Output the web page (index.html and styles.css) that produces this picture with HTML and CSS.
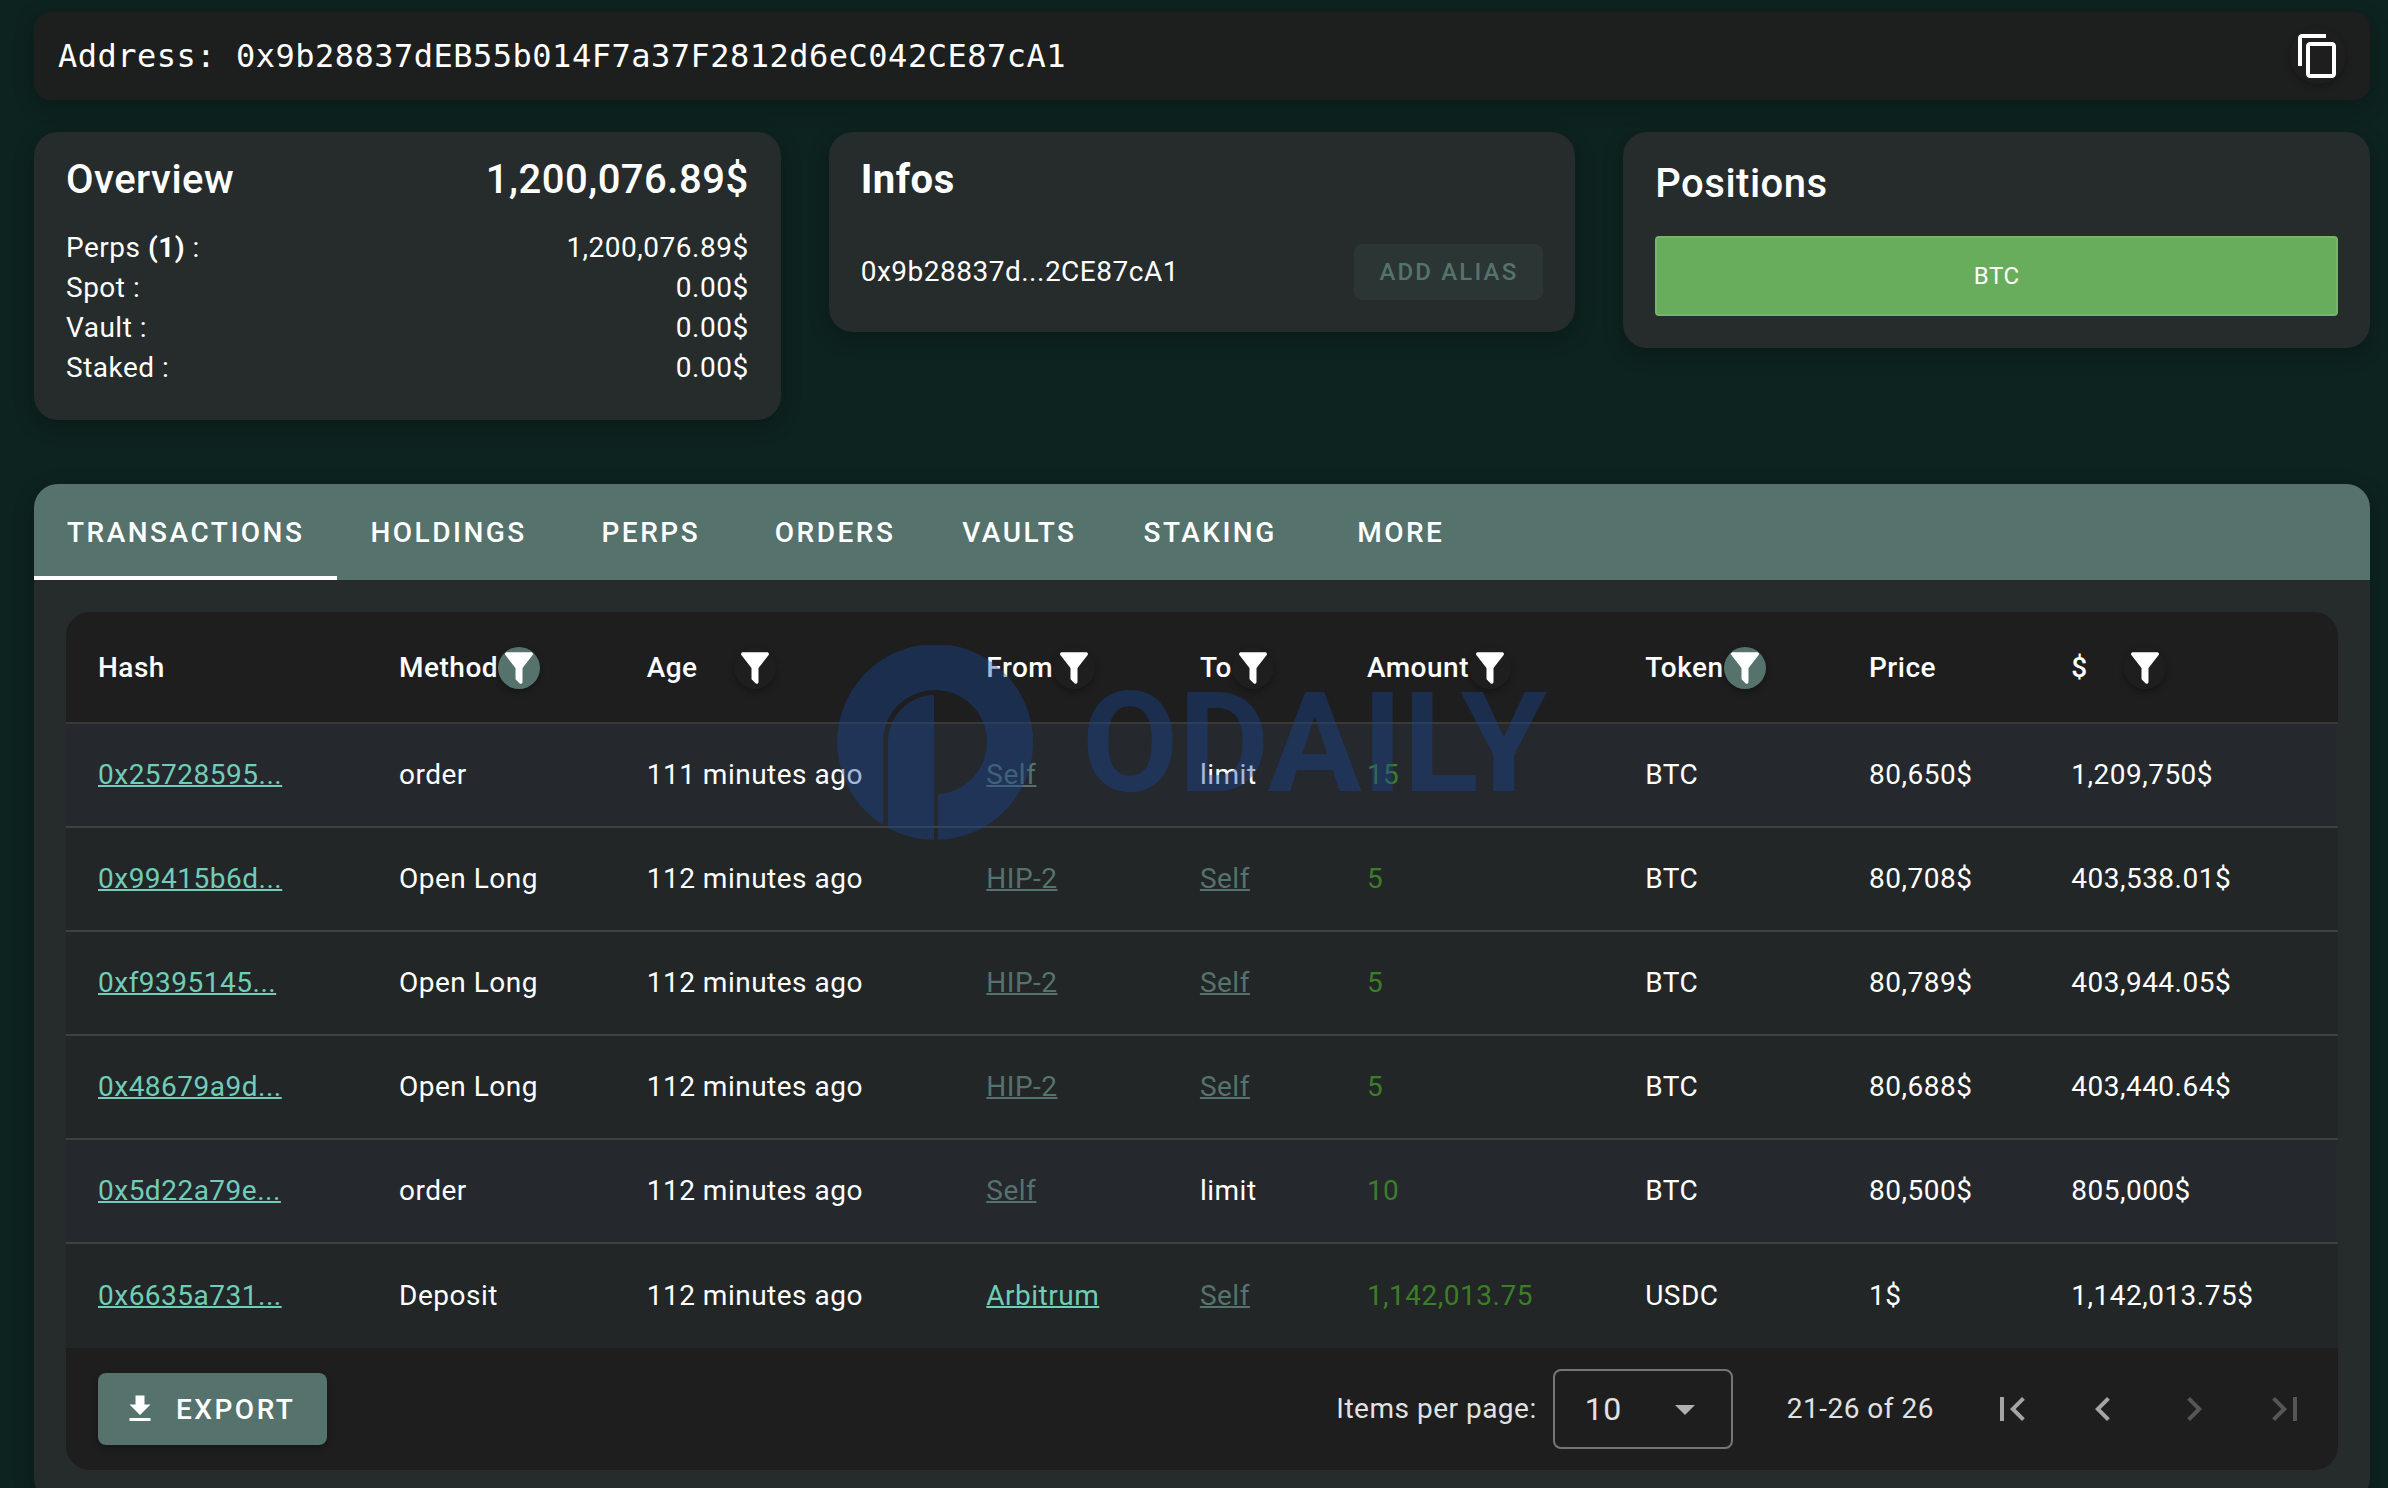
FILE: index.html
```html
<!DOCTYPE html>
<html lang="en">
<head>
    <meta charset="UTF-8">
    <meta name="viewport" content="width=device-width, initial-scale=1.0">
    <title>Address details</title>
    <link rel="stylesheet" href="styles.css">
</head>
<body>
    <!-- Shared icons -->
    <svg class="sprite" aria-hidden="true">
        <symbol id="icon-filter" viewBox="0 0 24 24">
            <path d="M14,12V19.88C14.04,20.18 13.94,20.5 13.71,20.71C13.32,21.1 12.69,21.1 12.3,20.71L10.29,18.7C10.06,18.47 9.96,18.16 10,17.87V12H9.97L4.21,4.62C3.87,4.19 3.95,3.56 4.38,3.22C4.57,3.08 4.78,3 5,3V3H19V3C19.22,3 19.43,3.08 19.62,3.22C20.05,3.56 20.13,4.19 19.79,4.62L14.03,12H14Z"/>
        </symbol>
    </svg>

    <main class="page">
        <header class="address-bar">
            <span class="address">Address: 0x9b28837dEB55b014F7a37F2812d6eC042CE87cA1</span>
            <button class="copy-btn" aria-label="Copy address">
                <svg viewBox="0 0 24 24"><path d="M16 1H4c-1.1 0-2 .9-2 2v14h2V3h12V1zm3 4H8c-1.1 0-2 .9-2 2v14c0 1.1.9 2 2 2h11c1.1 0 2-.9 2-2V7c0-1.1-.9-2-2-2zm0 16H8V7h11v14z"/></svg>
            </button>
        </header>

        <div class="cards">
            <section class="card">
                <h2 class="card-title"><span>Overview</span><span>1,200,076.89$</span></h2>
                <dl class="balances">
                    <div class="balance"><dt>Perps <b>(1)</b> :</dt><dd>1,200,076.89$</dd></div>
                    <div class="balance"><dt>Spot :</dt><dd>0.00$</dd></div>
                    <div class="balance"><dt>Vault :</dt><dd>0.00$</dd></div>
                    <div class="balance"><dt>Staked :</dt><dd>0.00$</dd></div>
                </dl>
            </section>

            <section class="card">
                <h2 class="card-title bold">Infos</h2>
                <div class="alias">
                    <span>0x9b28837d...2CE87cA1</span>
                    <button class="alias-btn">ADD ALIAS</button>
                </div>
            </section>

            <section class="card positions">
                <h2 class="card-title">Positions</h2>
                <div class="position">BTC</div>
            </section>
        </div>

        <section class="panel">
            <nav class="tabs">
                <button class="tab active">TRANSACTIONS</button>
                <button class="tab">HOLDINGS</button>
                <button class="tab">PERPS</button>
                <button class="tab">ORDERS</button>
                <button class="tab">VAULTS</button>
                <button class="tab">STAKING</button>
                <button class="tab">MORE</button>
            </nav>

            <div class="table-box">
                <table class="transactions">
                    <colgroup>
                        <col class="col-hash">
                        <col class="col-method">
                        <col class="col-age">
                        <col class="col-from">
                        <col class="col-to">
                        <col class="col-amount">
                        <col class="col-token">
                        <col class="col-price">
                        <col class="col-total">
                    </colgroup>
                    <thead>
                        <tr>
                            <th>Hash</th>
                            <th><div class="head">Method<button class="filter on" aria-label="Filter by method"><svg><use href="#icon-filter"/></svg></button></div></th>
                            <th><div class="head sortable">Age<button class="filter" aria-label="Filter by age"><svg><use href="#icon-filter"/></svg></button></div></th>
                            <th><div class="head">From<button class="filter" aria-label="Filter by sender"><svg><use href="#icon-filter"/></svg></button></div></th>
                            <th><div class="head">To<button class="filter" aria-label="Filter by receiver"><svg><use href="#icon-filter"/></svg></button></div></th>
                            <th><div class="head">Amount<button class="filter" aria-label="Filter by amount"><svg><use href="#icon-filter"/></svg></button></div></th>
                            <th><div class="head">Token<button class="filter on" aria-label="Filter by token"><svg><use href="#icon-filter"/></svg></button></div></th>
                            <th>Price</th>
                            <th><div class="head sortable">$<button class="filter" aria-label="Filter by value"><svg><use href="#icon-filter"/></svg></button></div></th>
                        </tr>
                    </thead>
                    <tbody>
                        <tr class="order">
                            <td><a href="#">0x25728595...</a></td>
                            <td>order</td>
                            <td>111 minutes ago</td>
                            <td><a href="#" class="muted">Self</a></td>
                            <td>limit</td>
                            <td class="amount">15</td>
                            <td>BTC</td>
                            <td>80,650$</td>
                            <td>1,209,750$</td>
                        </tr>
                        <tr>
                            <td><a href="#">0x99415b6d...</a></td>
                            <td>Open Long</td>
                            <td>112 minutes ago</td>
                            <td><a href="#" class="muted">HIP-2</a></td>
                            <td><a href="#" class="muted">Self</a></td>
                            <td class="amount">5</td>
                            <td>BTC</td>
                            <td>80,708$</td>
                            <td>403,538.01$</td>
                        </tr>
                        <tr>
                            <td><a href="#">0xf9395145...</a></td>
                            <td>Open Long</td>
                            <td>112 minutes ago</td>
                            <td><a href="#" class="muted">HIP-2</a></td>
                            <td><a href="#" class="muted">Self</a></td>
                            <td class="amount">5</td>
                            <td>BTC</td>
                            <td>80,789$</td>
                            <td>403,944.05$</td>
                        </tr>
                        <tr>
                            <td><a href="#">0x48679a9d...</a></td>
                            <td>Open Long</td>
                            <td>112 minutes ago</td>
                            <td><a href="#" class="muted">HIP-2</a></td>
                            <td><a href="#" class="muted">Self</a></td>
                            <td class="amount">5</td>
                            <td>BTC</td>
                            <td>80,688$</td>
                            <td>403,440.64$</td>
                        </tr>
                        <tr class="order">
                            <td><a href="#">0x5d22a79e...</a></td>
                            <td>order</td>
                            <td>112 minutes ago</td>
                            <td><a href="#" class="muted">Self</a></td>
                            <td>limit</td>
                            <td class="amount">10</td>
                            <td>BTC</td>
                            <td>80,500$</td>
                            <td>805,000$</td>
                        </tr>
                        <tr>
                            <td><a href="#">0x6635a731...</a></td>
                            <td>Deposit</td>
                            <td>112 minutes ago</td>
                            <td><a href="#">Arbitrum</a></td>
                            <td><a href="#" class="muted">Self</a></td>
                            <td class="amount">1,142,013.75</td>
                            <td>USDC</td>
                            <td>1$</td>
                            <td>1,142,013.75$</td>
                        </tr>
                    </tbody>
                </table>

                <footer class="table-footer">
                    <button class="export-btn">
                        <svg viewBox="0 0 24 24"><path d="M5 20h14v-2H5v2zM19 9h-4V3H9v6H5l7 7 7-7z"/></svg>
                        EXPORT
                    </button>
                    <label class="per-page" for="perPage">Items per page:</label>
                    <div class="select">
                        <select id="perPage">
                            <option>5</option>
                            <option selected>10</option>
                            <option>25</option>
                        </select>
                        <svg viewBox="0 0 20 10"><path d="M0 0h20L10 10z"/></svg>
                    </div>
                    <span class="range">21-26 of 26</span>
                    <div class="pager">
                        <button class="page-btn" aria-label="First page"><svg viewBox="0 0 24 24"><path d="M18.41 16.59L13.82 12l4.59-4.59L17 6l-6 6 6 6zM6 6h2v12H6z"/></svg></button>
                        <button class="page-btn" aria-label="Previous page"><svg viewBox="0 0 24 24"><path d="M15.41 7.41L14 6l-6 6 6 6 1.41-1.41L10.83 12z"/></svg></button>
                        <button class="page-btn" aria-label="Next page" disabled><svg viewBox="0 0 24 24"><path d="M10 6L8.59 7.41 13.17 12l-4.58 4.59L10 18l6-6z"/></svg></button>
                        <button class="page-btn" aria-label="Last page" disabled><svg viewBox="0 0 24 24"><path d="M5.59 7.41L10.18 12l-4.59 4.59L7 18l6-6-6-6zM16 6h2v12h-2z"/></svg></button>
                    </div>
                </footer>
            </div>
        </section>

        <!-- Watermark over the table -->
        <div class="watermark">
            <svg viewBox="0 0 198 196">
                <path d="M47 180A98 98 0 1 1 102 195V149A52 52 0 1 0 47 97Z"/>
                <path d="M52 183V97A47 47 0 0 1 98 50V195A98 98 0 0 1 52 183Z"/>
            </svg>
            <span>ODAILY</span>
        </div>
    </main>
</body>
</html>
```
FILE: styles.css
```css
* {
    box-sizing: border-box;
}

body {
    margin: 0;
    background-color: #0d231f;
    color: #fff;
    font-family: Roboto, "Liberation Sans", sans-serif;
    font-size: 28px;
    line-height: 40px;
    letter-spacing: 0.0179em;
}

button,
select {
    font-family: inherit;
    color: inherit;
    border: none;
    cursor: pointer;
}

svg {
    display: block;
    fill: currentColor;
}

.sprite {
    position: absolute;
    width: 0;
    height: 0;
}

.page {
    position: relative;
    height: 100vh;
    overflow: hidden;
    padding: 12px 18px 0 34px;
}

/* Address */
.address-bar {
    display: flex;
    justify-content: space-between;
    align-items: center;
    height: 88px;
    padding: 0 24px;
    background-color: #1d1e1e;
    border-radius: 16px;
    box-shadow: 0 6px 20px rgba(0, 0, 0, 0.25);
}

.address {
    font-family: "DejaVu Sans Mono", monospace;
    font-size: 32px;
    letter-spacing: 0.0156em;
}

.copy-btn {
    display: flex;
    align-items: center;
    justify-content: center;
    width: 56px;
    height: 56px;
    padding: 0;
    background-color: #1e1e1e;
    border-radius: 50%;
    box-shadow: 0 3px 6px rgba(0, 0, 0, 0.25);
}

.copy-btn svg {
    width: 48px;
    height: 48px;
}

/* Cards */
.cards {
    display: grid;
    grid-template-columns: repeat(3, 1fr);
    gap: 48px;
    align-items: start;
    margin: 32px 0 64px;
}

.card {
    padding: 16px 32px 32px;
    background-color: #262b2b;
    border-radius: 24px;
    box-shadow: 0 6px 20px rgba(0, 0, 0, 0.25);
}

.card-title {
    display: flex;
    justify-content: space-between;
    margin: 0;
    font-size: 40px;
    font-weight: 500;
    line-height: 64px;
    letter-spacing: 0.0125em;
}

.card-title.bold {
    font-weight: 700;
}

.balances {
    margin: 16px 0 0;
}

.balance {
    display: flex;
    justify-content: space-between;
}

.balance dd {
    margin: 0;
}

.alias {
    display: flex;
    justify-content: space-between;
    align-items: center;
    margin-top: 32px;
}

.alias-btn {
    height: 56px;
    padding: 0 25px;
    background-color: #2b3533;
    color: #56726c;
    border-radius: 8px;
    font-size: 24px;
    font-weight: 500;
    letter-spacing: 0.0893em;
}

.positions {
    padding-top: 20px;
}

.position {
    display: flex;
    align-items: center;
    justify-content: center;
    height: 80px;
    margin-top: 20px;
    background-color: #68ad5c;
    border: 2px solid #78b56c;
    border-radius: 4px;
    font-size: 24px;
}

/* Tabs */
.panel {
    padding-bottom: 32px;
    background-color: #262b2b;
    border-radius: 24px;
    box-shadow: 0 6px 20px rgba(0, 0, 0, 0.25);
}

.tabs {
    display: flex;
    height: 96px;
    background-color: #56726c;
    border-radius: 24px 24px 0 0;
    overflow: hidden;
}

.tab {
    min-width: 182px;
    padding: 0 33px;
    background: none;
    border-top: 4px solid transparent;
    border-bottom: 4px solid transparent;
    font-size: 28px;
    font-weight: 500;
    letter-spacing: 0.0893em;
}

.tab.active {
    border-bottom-color: #fff;
}

/* Table */
.table-box {
    margin: 32px 32px 0;
    background-color: #1e1e1e;
    border-radius: 24px;
    overflow: hidden;
}

.transactions {
    width: 100%;
    table-layout: fixed;
    border-collapse: separate;
    border-spacing: 0;
}

.col-hash { width: 13.25%; }
.col-method { width: 10.9%; }
.col-age { width: 14.95%; }
.col-from { width: 9.4%; }
.col-to { width: 7.35%; }
.col-amount { width: 12.25%; }
.col-token { width: 9.85%; }
.col-price { width: 8.9%; }
.col-total { width: 13.15%; }

.transactions th {
    height: 112px;
    padding: 2px 0 0 32px;
    border-bottom: 2px solid #393939;
    text-align: left;
    font-weight: 500;
}

.transactions td {
    height: 104px;
    padding: 0 0 0 32px;
    background-color: #222626;
    border-bottom: 2px solid #3d4141;
    white-space: nowrap;
}

.transactions .order td {
    background-color: #25282d;
}

.transactions tbody tr:last-child td {
    border-bottom: none;
}

.transactions a {
    color: #70cdb7;
    text-decoration-thickness: 2px;
}

.transactions a.muted {
    color: #56726c;
}

.transactions .amount {
    color: #3c7d2a;
}

.head {
    display: flex;
    align-items: center;
}

.filter {
    width: 42px;
    height: 42px;
    padding: 0;
    background-color: #1e1e1e;
    border-radius: 50%;
    box-shadow: 0 3px 6px rgba(0, 0, 0, 0.3);
}

.filter.on {
    background-color: #56726c;
}

.sortable .filter {
    margin-left: 36px;
}

.filter svg {
    width: 42px;
    height: 42px;
}

/* Footer */
.table-footer {
    display: flex;
    align-items: center;
    padding: 21px 13px 21px 32px;
    color: #e2e2e2;
}

.export-btn {
    display: flex;
    align-items: center;
    gap: 18px;
    height: 72px;
    padding: 0 32px 0 24px;
    background-color: #56726c;
    color: #fff;
    border-radius: 8px;
    box-shadow: 0 3px 6px rgba(0, 0, 0, 0.3);
    font-size: 28px;
    font-weight: 500;
    letter-spacing: 0.0893em;
}

.export-btn svg {
    width: 36px;
    height: 36px;
}

.per-page {
    margin-left: auto;
}

.select {
    position: relative;
    width: 180px;
    margin: 0 54px 0 16px;
}

.select select {
    display: block;
    width: 100%;
    height: 80px;
    padding: 0 30px;
    appearance: none;
    background: none;
    border: 2px solid #757575;
    border-radius: 8px;
    font-size: 32px;
    letter-spacing: 0.0156em;
}

.select svg {
    position: absolute;
    top: 36px;
    right: 38px;
    width: 20px;
    height: 10px;
    color: #b0b0b0;
    pointer-events: none;
}

.pager {
    display: flex;
    gap: 11px;
    margin-left: 38px;
}

.page-btn {
    display: flex;
    align-items: center;
    justify-content: center;
    width: 80px;
    height: 80px;
    padding: 0;
    background: none;
    color: #a5a5a5;
}

.page-btn:disabled {
    color: #565656;
}

.page-btn svg {
    width: 48px;
    height: 48px;
}

/* Watermark */
.watermark {
    position: absolute;
    top: 645px;
    left: 35%;
    display: flex;
    align-items: center;
    gap: 48px;
    color: rgb(24, 72, 155);
    opacity: 0.38;
    pointer-events: none;
}

.watermark svg {
    width: 198px;
    height: 196px;
}

.watermark span {
    font-size: 140px;
    font-weight: 700;
    letter-spacing: normal;
}
```
